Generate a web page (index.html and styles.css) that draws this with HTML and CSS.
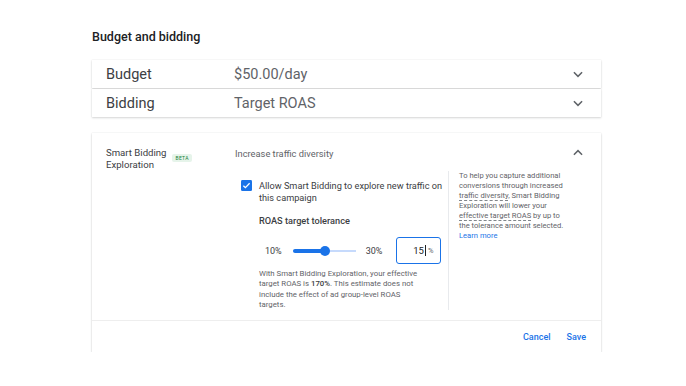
FILE: index.html
```html
<!DOCTYPE html>
<html lang="en">
<head>
    <meta charset="UTF-8">
    <meta name="viewport" content="width=device-width, initial-scale=1.0">
    <title>Budget and bidding</title>
    <link rel="stylesheet" href="styles.css">
</head>
<body>

<div class="page">
    <h2 class="section-title">Budget and bidding</h2>

    <div class="summary-row">
        <span class="row-label">Budget</span>
        <span class="row-value">$50.00/day</span>
        <svg class="chevron" viewBox="0 0 12 12"><path d="M2.5 4.5L6 8l3.5-3.5"/></svg>
    </div>
    <div class="summary-row">
        <span class="row-label">Bidding</span>
        <span class="row-value">Target ROAS</span>
        <svg class="chevron" viewBox="0 0 12 12"><path d="M2.5 4.5L6 8l3.5-3.5"/></svg>
    </div>

    <div class="panel">
        <div class="panel-body">
            <div class="panel-label">
                <span class="label-text">Smart Bidding<br>Exploration</span>
                <span class="beta">BETA</span>
            </div>
            <div class="panel-content">
                <div class="panel-head">
                    <span>Increase traffic diversity</span>
                    <svg class="chevron" viewBox="0 0 12 12"><path d="M2.5 7.5L6 4l3.5 3.5"/></svg>
                </div>
                <div class="panel-inner">
                    <div class="settings">
                        <label class="check-row">
                            <svg class="checkbox" viewBox="0 0 12 12">
                                <rect width="12" height="12" rx="1.5" fill="#1a73e8"/>
                                <path d="M2.6 6.2l2.2 2.2 4.6-4.8" fill="none" stroke="#fff" stroke-width="1.4"/>
                            </svg>
                            <span>Allow Smart Bidding to explore new traffic on this campaign</span>
                        </label>
                        <div class="tolerance-title">ROAS target tolerance</div>
                        <div class="slider-row">
                            <span class="slider-num">10%</span>
                            <div class="slider">
                                <div class="slider-fill"></div>
                                <div class="slider-knob"></div>
                            </div>
                            <span class="slider-num">30%</span>
                            <div class="pct-input">
                                <span class="pct-value">15</span><span class="caret"></span><span class="pct-sign">%</span>
                            </div>
                        </div>
                        <p class="estimate">With Smart Bidding Exploration, your effective target ROAS is <b>170%</b>. This estimate does not include the effect of ad group-level ROAS targets.</p>
                    </div>
                    <div class="help">
                        To help you capture additional conversions through increased <span class="dotted">traffic diversity</span>, Smart Bidding Exploration will lower your <span class="dotted">effective target ROAS</span> by up to the tolerance amount selected.
                        <a href="#" class="learn">Learn more</a>
                    </div>
                </div>
            </div>
        </div>
        <div class="panel-footer">
            <a href="#" class="btn">Cancel</a>
            <a href="#" class="btn">Save</a>
        </div>
    </div>
</div>

</body>
</html>
```

FILE: styles.css
```css
body {
    margin: 0;
    padding: 0;
    background-color: #fff;
    font-family: Roboto, "Noto Sans", Arial, sans-serif;
    color: #3c4043;
}
.page {
    width: 509px;
    margin-left: 92px;
    padding-top: 29px;
}
.section-title {
    margin: 0 0 15px;
    font-size: 12.5px;
    line-height: 16px;
    font-weight: 500;
    color: #202124;
}
.summary-row {
    display: flex;
    align-items: center;
    height: 28px;
    margin-bottom: 1px;
    padding: 0 16px 0 14px;
    background-color: #fff;
    box-shadow: 0 1px 2px rgba(60, 64, 67, 0.2), 0 0 1px rgba(60, 64, 67, 0.15);
    font-size: 14.5px;
}
.row-label {
    width: 128px;
    color: #3c4043;
}
.row-value {
    flex: 1;
    color: #5f6368;
}
.chevron {
    width: 14px;
    height: 14px;
    fill: none;
    stroke: #5f6368;
    stroke-width: 1.3;
}
.panel {
    margin-top: 16px;
    background-color: #fff;
    box-shadow: 0 1px 2px rgba(60, 64, 67, 0.22), 0 0 1px rgba(60, 64, 67, 0.15);
}
.panel-body {
    display: flex;
    padding: 14px 16px 10px 14px;
    border-bottom: 1px solid #eee;
}
.panel-label {
    width: 129px;
    display: flex;
    align-items: flex-start;
    font-size: 9.6px;
    line-height: 12px;
    color: #3c4043;
}
.beta {
    margin: 7px 0 0 6px;
    padding: 1px 3px;
    font-size: 5px;
    line-height: 6px;
    letter-spacing: 0.3px;
    color: #188038;
    background-color: #e6f4ea;
    border-radius: 2px;
}
.panel-content {
    flex: 1;
}
.panel-head {
    display: flex;
    align-items: center;
    justify-content: space-between;
    height: 12px;
    font-size: 9.3px;
    color: #5f6368;
}
.panel-inner {
    display: flex;
    margin-top: 12px;
}
.settings {
    box-sizing: border-box;
    width: 214px;
    padding: 9px 4px 0 6px;
    border-right: 1px solid #e8eaed;
}
.check-row {
    display: flex;
    align-items: flex-start;
    font-size: 9.2px;
    line-height: 12px;
    color: #3c4043;
}
.checkbox {
    flex: none;
    width: 11px;
    height: 11px;
    margin: 0 7px 0 0;
}
.tolerance-title {
    margin: 11px 0 0 18px;
    font-size: 9.2px;
    line-height: 12px;
    font-weight: 500;
    color: #3c4043;
}
.slider-row {
    display: flex;
    align-items: center;
    margin: 10px 0 0 24px;
    height: 27px;
}
.slider-num {
    font-size: 9px;
    color: #3c4043;
}
.slider {
    position: relative;
    flex: none;
    width: 63px;
    height: 2px;
    margin: 0 10px 0 11px;
    background-color: #c6dafc;
}
.slider-fill {
    width: 32px;
    height: 4px;
    margin-top: -1px;
    border-radius: 2px;
    background-color: #1a73e8;
}
.slider-knob {
    position: absolute;
    left: 27px;
    top: -4px;
    width: 10px;
    height: 10px;
    border-radius: 50%;
    background-color: #1a73e8;
}
.pct-input {
    display: flex;
    align-items: center;
    justify-content: flex-end;
    flex: none;
    box-sizing: border-box;
    width: 45px;
    height: 27px;
    margin-left: 14px;
    padding-right: 7px;
    border: 1.5px solid #1a73e8;
    border-radius: 3px;
}
.pct-value {
    font-size: 9.5px;
    color: #202124;
}
.caret {
    width: 1px;
    height: 11px;
    margin: 0 2px 0 1px;
    background-color: #202124;
}
.pct-sign {
    font-size: 7.5px;
    color: #5f6368;
}
.estimate {
    width: 162px;
    margin: 5px 0 0 18px;
    font-size: 7.8px;
    line-height: 10.3px;
    color: #5f6368;
}
.estimate b {
    font-weight: 500;
    color: #3c4043;
}
.help {
    width: 108px;
    padding: 0 0 0 10px;
    font-size: 7.6px;
    line-height: 10px;
    color: #5f6368;
}
.dotted {
    border-bottom: 1px dashed #80868b;
}
.learn {
    display: block;
    color: #1a73e8;
    text-decoration: none;
}
.panel-footer {
    display: flex;
    justify-content: flex-end;
    align-items: center;
    gap: 16px;
    height: 31px;
    padding-right: 15px;
}
.btn {
    font-size: 9px;
    font-weight: 500;
    color: #1a73e8;
    text-decoration: none;
}
```
